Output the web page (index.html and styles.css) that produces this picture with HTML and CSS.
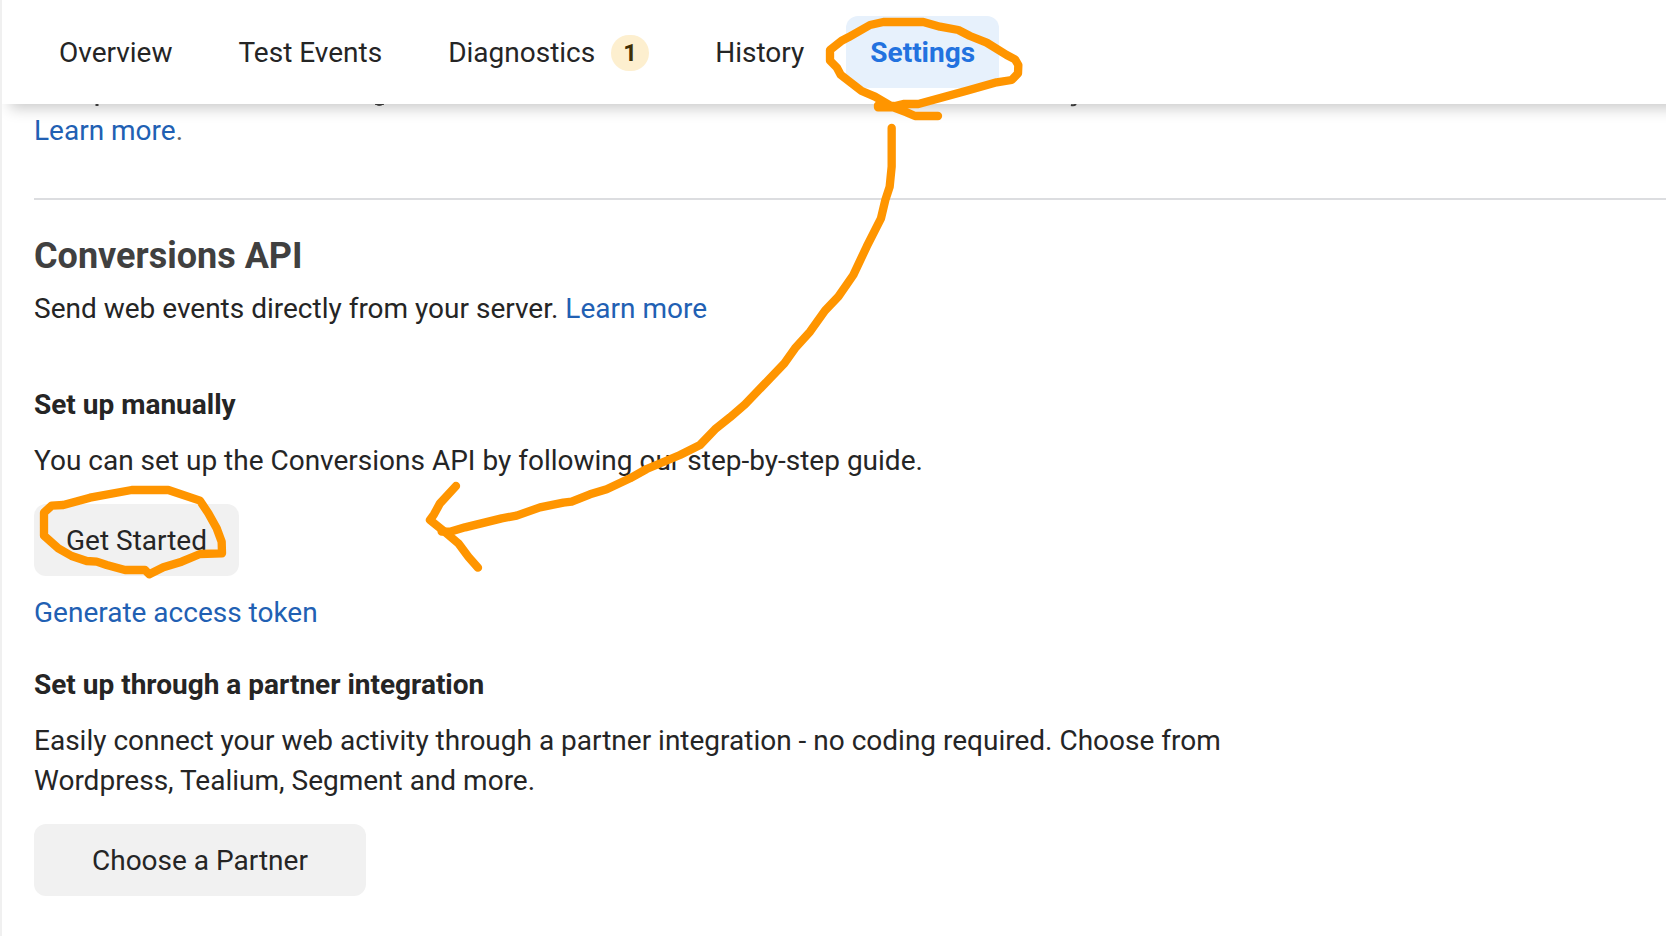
FILE: index.html
```html
<!DOCTYPE html>
<html lang="en">
<head>
<meta charset="utf-8">
<meta name="viewport" content="width=device-width, initial-scale=1">
<title>Settings</title>
<link rel="stylesheet" href="styles.css">
</head>
<body>
<div class="page">
  <header class="topbar">
    <nav class="tabs">
      <a class="tab" href="#overview">Overview</a>
      <a class="tab" href="#test-events">Test Events</a>
      <a class="tab" href="#diagnostics">Diagnostics <span class="badge">1</span></a>
      <a class="tab" href="#history">History</a>
      <a class="tab tab-active" href="#settings" aria-current="page">Settings</a>
    </nav>
  </header>

  <main class="content">
    <section class="previous">
      <!-- descenders of the text line scrolled under the top bar -->
      <svg class="scrolled-line" width="1100" height="7" aria-hidden="true">
        <path d="M63 0v2" stroke="#444" stroke-width="3"/>
        <path d="M341 0q4 3 9 0z" fill="#444" stroke="#444"/>
        <path d="M1037 1q3 1 5-1" fill="none" stroke="#444" stroke-width="2"/>
      </svg>
      <p class="text muted"><a class="link" href="#learn">Learn more</a>.</p>
    </section>

    <section class="section">
      <h1 class="title">Conversions API</h1>
      <p class="text">Send web events directly from your server. <a class="link" href="#learn-api">Learn more</a></p>

      <div class="block block-first">
        <h2 class="subtitle">Set up manually</h2>
        <p class="text">You can set up the Conversions API by following our step-by-step guide.</p>
        <button class="button" type="button">Get Started</button>
        <a class="link token" href="#token">Generate access token</a>
      </div>

      <div class="block">
        <h2 class="subtitle">Set up through a partner integration</h2>
        <p class="text">Easily connect your web activity through a partner integration - no coding required. Choose from Wordpress, Tealium, Segment and more.</p>
        <button class="button button-wide" type="button">Choose a Partner</button>
      </div>
    </section>
  </main>

  <!-- hand-drawn marks over the page -->
  <svg class="marks" viewBox="0 0 4998 2808" aria-hidden="true">
    <path transform="translate(2400 0)" d="M414 348H345L320 337 280 322 225 290 185 273 150 246 122 224 110 202 90 182V150L125 122 145 112 210 75 250 66H370L420 80 475 90 510 108 560 128 620 165 645 178 655 195 654 220 635 240 590 247 500 272 355 312H310L270 322H234V316L280 318"/>
    <path d="M2675 384V500L2669 560 2656 600 2643 655 2600 740 2560 825 2515 890 2475 932 2430 995 2385 1045 2353 1090 2310 1135 2235 1213 2190 1252 2145 1288 2100 1335 2040 1365 1940 1407 1890 1435 1820 1468 1770 1483 1715 1505 1690 1508 1620 1522 1550 1547 1505 1555 1395 1582 1350 1595H1325"/>
    <path d="M1368 1458L1320 1510 1302 1543 1290 1560 1330 1592 1375 1630 1405 1670 1434 1703"/>
    <path transform="translate(0 1410)" d="M448 313L435 300H375L320 285 290 275 260 273 215 258 175 235 132 197V128L155 107 190 105 270 83 395 60H505L600 92 625 130 650 175 665 215 666 250 600 252 545 275 490 292Z"/>
  </svg>
</div>
</body>
</html>
```
FILE: styles.css
```css
* {
  box-sizing: border-box;
}

body {
  margin: 0;
  background: #fff;
  color: #252525;
  font-family: Roboto, "Liberation Sans", sans-serif;
  font-size: 28px;
  line-height: 40px;
}

.page {
  position: relative;
  min-height: 100vh;
  overflow: hidden;
  border-left: 2px solid #f0f0f0;
}

.topbar {
  position: relative;
  z-index: 1;
  margin-right: -24px;
  padding: 16px 33px;
  background: #fff;
  box-shadow: 0 12px 14px -8px rgba(0, 0, 0, 0.22);
}

.tabs {
  display: flex;
  gap: 18px;
}

.tab {
  display: flex;
  align-items: center;
  gap: 16px;
  height: 72px;
  padding: 2px 24px 0;
  border-radius: 12px;
  color: inherit;
  text-decoration: none;
  white-space: nowrap;
}

.tab-active {
  background: #e7f1fc;
  color: #2272df;
  font-weight: 700;
}

.badge {
  width: 38px;
  height: 36px;
  border-radius: 18px;
  background: #fdefcf;
  color: #3f2f05;
  font-size: 24px;
  font-weight: 700;
  line-height: 36px;
  text-align: center;
}

.content {
  padding-left: 32px;
}

.previous {
  padding-bottom: 47px;
  border-bottom: 2px solid #dcdde0;
}

.scrolled-line {
  display: block;
}

.section {
  padding: 32px 0 40px;
}

.title,
.subtitle,
.text {
  margin: 0;
}

.title {
  margin-bottom: 9px;
  color: #404040;
  font-size: 36px;
  line-height: 48px;
}

.subtitle {
  margin-bottom: 16px;
  font-size: 28px;
  line-height: 40px;
}

.text {
  max-width: 1200px;
}

.muted {
  color: #666;
}

.link {
  color: #2160b3;
  text-decoration: none;
}

.block {
  display: flex;
  flex-direction: column;
  align-items: flex-start;
  margin-top: 32px;
}

.block-first {
  margin-top: 56px;
}

.button {
  height: 72px;
  margin-top: 23px;
  padding: 2px 32px 0;
  border: 0;
  border-radius: 12px;
  background: #f1f1f1;
  color: inherit;
  font: inherit;
}

.button-wide {
  padding: 2px 58px 0;
}

.token {
  margin-top: 17px;
}

.marks {
  position: absolute;
  z-index: 2;
  top: 0;
  left: -2px;
  width: 1666px;
  height: 936px;
  fill: none;
  stroke: #ff9500;
  stroke-width: 25;
  stroke-linecap: round;
  stroke-linejoin: round;
  pointer-events: none;
}
```
